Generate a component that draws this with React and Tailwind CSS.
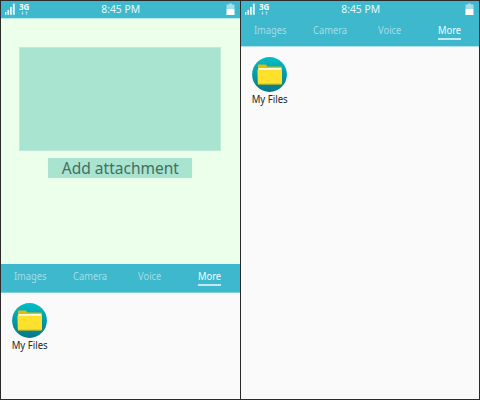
import React from "react";

function StatusBar() {
  return (
    <div className="flex h-[17px] shrink-0 items-start justify-between pl-[4px] pr-[5px] text-white">
      <div className="flex w-[40px] gap-[4px] pt-[2px]">
        <svg className="h-[12px] w-[10px]" viewBox="0 0 10 12" fill="#e2f5f9">
          <rect x="0" y="9" width="1.5" height="2.8" />
          <rect x="2.4" y="7" width="1.7" height="4.8" />
          <rect x="5" y="4" width="1.8" height="7.8" />
          <rect x="7.8" y="0.6" width="2" height="11.2" />
        </svg>
        <div className="flex flex-col items-center">
          <span className="text-[8px] font-bold leading-[8px]">3G</span>
          <svg className="h-[4px] w-[7px]" viewBox="0 0 7 4" fill="#9cdae5">
            <path d="M1 0H2V2H3L1.5 4L0 2H1ZM5 4H6V2H7L5.5 0L4 2H5Z" />
          </svg>
        </div>
      </div>
      <span className="ml-[2px] scale-x-[0.94] whitespace-nowrap text-[11px] leading-[15px] text-[#e8f8fa]">8:45 PM</span>
      <div className="flex w-[40px] justify-end pt-[2px]">
        <svg className="h-[12px] w-[9px]" viewBox="0 0 9 12">
          <path d="M3 0.5H6V1.5H8.5V6H0.5V1.5H3Z" fill="#a9dee8" />
          <rect x="0.5" y="6" width="8" height="6" fill="#fff" />
        </svg>
      </div>
    </div>
  );
}

function Tab({ label, active }) {
  return (
    <div className="flex h-full w-[60px] shrink-0 flex-col items-center">
      <span
        className={
          "origin-center scale-x-[0.85] whitespace-nowrap text-[11px] leading-[15px] " +
          (active ? "text-[#f4fcfd]" : "text-[#a5dde7]")
        }
      >
        {label}
      </span>
      {active && <div className="mr-[1px] mt-[1px] h-[2px] w-[23px] bg-[#c3e9f0]" />}
    </div>
  );
}

function Tabs() {
  return (
    <div className="flex -ml-px">
      <Tab label="Images" />
      <Tab label="Camera" />
      <Tab label="Voice" />
      <Tab label="More" active />
    </div>
  );
}

function FilesApp({ id }) {
  return (
    <div className="ml-[-1px] flex w-[60px] flex-col items-center">
      <svg className="mr-[1px] h-[35px] w-[35px]" viewBox="0 0 35 35">
        <defs>
          <linearGradient id={id} x1="0" y1="0" x2="0" y2="1">
            <stop offset="0" stopColor="#00bec9" />
            <stop offset="1" stopColor="#067789" />
          </linearGradient>
        </defs>
        <circle cx="17.5" cy="17.5" r="17.4" fill={`url(#${id})`} />
        <path d="M6 8.2Q6 7.5 6.8 7.5H13.5Q14.2 7.5 14.6 8.3L15.2 9.5H29Q29.8 9.5 29.8 10.3V18H6Z" fill="#dfbd08" />
        <rect x="6.4" y="11" width="23" height="3" fill="#fffbe0" />
        <path d="M5.4 12.8H30V26.5Q30 27.5 29 27.5H6.6Q5.8 27.5 5.8 26.5Z" fill="#ffe02c" />
        <path d="M6 27.1H30" stroke="#a6a827" strokeWidth="0.7" />
      </svg>
      <span className="mt-[-1px] scale-x-[0.87] whitespace-nowrap text-[11px] leading-[15px] text-[#262626]">My Files</span>
    </div>
  );
}

export default function App() {
  return (
    <div className="flex h-[400px] w-[480px] overflow-hidden bg-[#fafafa] font-['Noto_Sans','Open_Sans',sans-serif]">
      <div className="flex h-[400px] w-[241px] flex-col border border-[#2b2b2b]">
        <div className="h-[17px] shrink-0 bg-[#3db8cc]">
          <StatusBar />
        </div>
        <div className="flex h-[246px] shrink-0 flex-col items-center border-t border-[#b9e9e5] bg-[#ebffeb] pr-[2px]">
          <div className="mt-[28px] h-[104px] w-[202px] border border-[#bdebd8] bg-[#a8e4d0]" />
          <div className="mt-[7px] flex h-[20px] w-[144px] items-center justify-center bg-[#a8e4d0]">
            <span className="ml-[2px] scale-x-[0.97] whitespace-nowrap text-[16px] leading-[20px] text-[#466e62]">Add attachment</span>
          </div>
        </div>
        <div className="h-[29px] shrink-0 border-b border-[#83d0dd] bg-[#3db8cc] pt-[4px]">
          <Tabs />
        </div>
        <div className="pt-[10px]">
          <FilesApp id="filesLeft" />
        </div>
      </div>
      <div className="flex h-[400px] w-[239px] flex-col border-y border-r border-[#2b2b2b]">
        <div className="h-[46px] shrink-0 border-b border-[#b4e1e9] bg-[#3db8cc]">
          <StatusBar />
          <div className="pt-[4px]">
            <Tabs />
          </div>
        </div>
        <div className="pt-[10px]">
          <FilesApp id="filesRight" />
        </div>
      </div>
    </div>
  );
}
